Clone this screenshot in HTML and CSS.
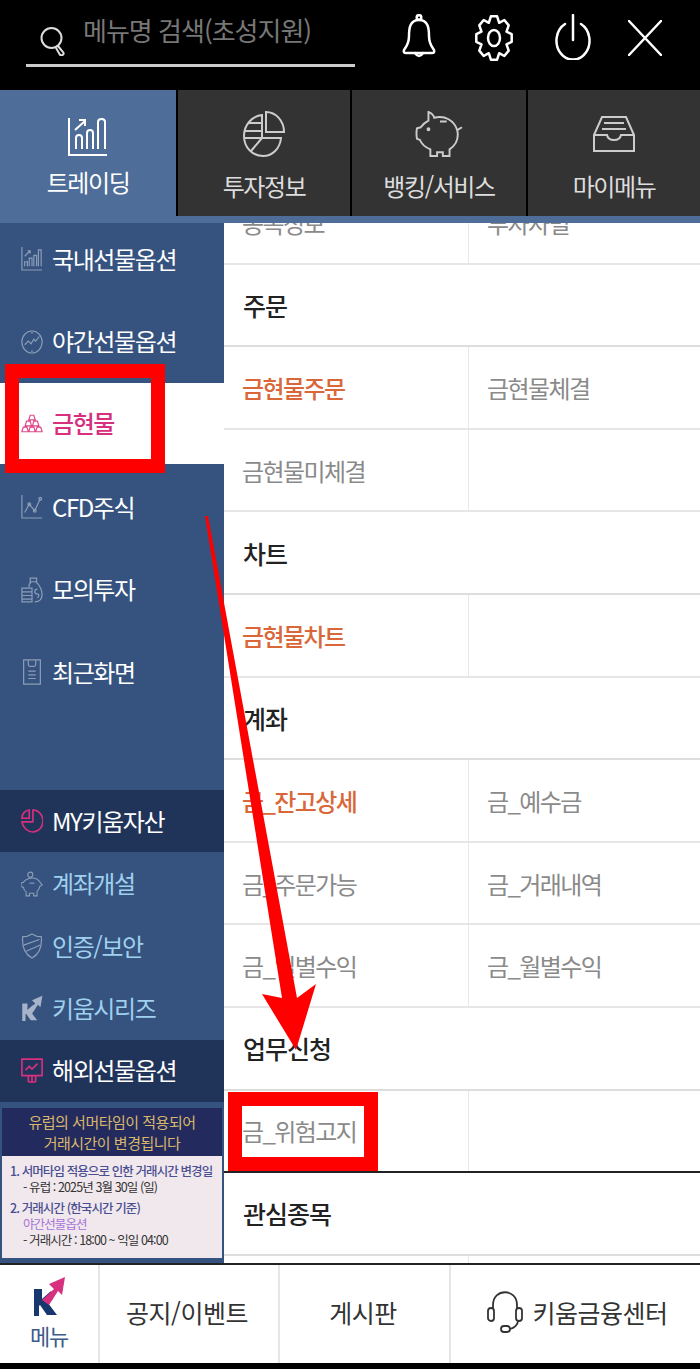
FILE: index.html
```html
<!DOCTYPE html>
<html lang="ko">
<head>
    <meta charset="UTF-8">
    <title>메뉴</title>
    <link rel="stylesheet" href="styles.css">
</head>
<body>
<svg class="defs" width="0" height="0">
    <symbol id="kiwoom" viewBox="0 0 32 40">
        <path class="k-letter" d="M1 13h8v10l9 -8l2 8l-5 4l9 12h-10l-7 -10l-1 1v10h-5z"/>
        <path class="k-arrow" d="M9 24l12 -11l-5 -5l16 -7l-3 18l-4 -4l-9 14z"/>
    </symbol>
</svg>
<div class="page">
    <header class="topbar">
        <div class="search">
            <svg class="search-icon" viewBox="0 0 26 30"><circle cx="11.5" cy="12" r="10"/><path d="M18 20l5 6q1.500 2 -0.500 3t-3 -1l-3.500 -6"/></svg>
            <span class="search-text">메뉴명 검색(초성지원)</span>
        </div>
        <svg class="top-icon bell" viewBox="0 0 34 46"><circle cx="17" cy="3.500" r="2.300"/><path d="M17 6c-9 0 -10 8 -10 16c0 8 -3 11 -5 14q-1 3 2 3h26q3 0 2 -3c-2 -3 -5 -6 -5 -14c0 -8 -1 -16 -10 -16z"/><path d="M13 39q4 6 8 0"/></svg>
        <svg class="top-icon gear" viewBox="0 0 38 46"><path d="M15.900 1.300L22.100 1.300L24.200 7.800L29.300 5L33.700 10.400L31.500 16.700L36.700 19.200L36.700 26.800L31.500 29.300L33.700 35.600L29.300 41L24.200 38.200L22.100 44.700L15.900 44.700L13.800 38.200L8.700 41L4.300 35.600L6.500 29.300L1.300 26.800L1.300 19.200L6.500 16.700L4.300 10.400L8.700 5L13.800 7.800Z"/><ellipse cx="19" cy="23" rx="6" ry="8"/></svg>
        <svg class="top-icon power" viewBox="0 0 36 46"><path d="M18 1v25"/><path d="M10 10a16.500 19 0 1 0 16 0"/></svg>
        <svg class="top-icon close" viewBox="0 0 34 36"><path d="M1 1l32 34M33 1l-32 34"/></svg>
    </header>

    <nav class="tabs">
        <div class="tab tab-on">
            <svg class="tab-icon" viewBox="0 0 40 40"><path d="M1 1v37h38"/><path d="M8 32v-11q0 -3 3 -3t3 3v11M19 32v-16q0 -3 3 -3t3 3v16M30 32v-27q0 -3 3.500 -3t3.500 3v27"/><path d="M7 13l10 -9M11 3h6v6"/></svg>
            <span>트레이딩</span>
        </div>
        <div class="tab">
            <svg class="tab-icon" viewBox="0 0 42 46"><path d="M23 1c10 0 18 9 18 20h-18z"/><path d="M19 4c-10 1 -18 10 -18 21c0 12 9 20 19 20c10 0 17 -8 18 -18h-19z"/><path d="M5 12h14M1 20h18M1 27h18M19 27l-11 13"/></svg>
            <span>투자정보</span>
        </div>
        <div class="tab">
            <svg class="tab-icon pig" viewBox="0 0 48 48"><path d="M13 1q5 2 6 6c11 -3 21 3 24 13c2 9 -2 16 -8 20v7h-7v-4h-6v4h-7v-7c-5 -2 -9 -5 -11 -10l-3 -1q-1 -6 0 -11l4 -1c2 -3 4 -5 8 -7z"/><path d="M43 20l5 -3M25 11h7"/><circle cx="13" cy="19" r="1"/></svg>
            <span>뱅킹/서비스</span>
        </div>
        <div class="tab">
            <svg class="tab-icon" viewBox="0 0 42 36"><path d="M9 1h24l8 18v16h-40v-16z"/><path d="M1 19h13q1 5 7 5t7 -5h13"/><path d="M11 7h20M9 13h24"/></svg>
            <span>마이메뉴</span>
        </div>
    </nav>
    <div class="strip"></div>

    <main class="main">
        <aside class="side">
            <ul class="side-list">
                <li class="side-item">
                    <svg class="side-icon" viewBox="0 0 24 26"><path d="M1 0v25h22"/><path d="M4 21v-5h3v5M9 21v-9h3v9M14 21v-12h3v12M19 21v-18h3v18"/><path d="M4 10l6 -6M7 4h3v3"/></svg>
                    <span>국내선물옵션</span>
                </li>
                <li class="side-item">
                    <svg class="side-icon" viewBox="0 0 24 26"><ellipse cx="12" cy="13" rx="11" ry="12"/><path d="M4 16l4 -4l3 3l3 -5l2 2l4 -5"/><path d="M12 2v2M12 22v2"/></svg>
                    <span>야간선물옵션</span>
                </li>
                <li class="side-item side-on">
                    <svg class="side-icon gold" viewBox="0 0 24 20"><path d="M10 1h4l1.500 5h-7zM6 7.500h4l1.500 5h-7zM14 7.500h4l1.500 5h-7zM2.500 14h4l1.500 5h-7zM10 14h4l1.500 5h-7zM17.500 14h4l1.500 5h-7z"/></svg>
                    <span>금현물</span>
                </li>
                <li class="side-item">
                    <svg class="side-icon" viewBox="0 0 24 26"><path d="M1 0v25h22"/><path d="M4 19l5 -9l6 7l6 -13"/><circle cx="9" cy="10" r="1.500"/><circle cx="15" cy="17" r="1.500"/><circle cx="21" cy="4" r="1.500"/></svg>
                    <span>CFD주식</span>
                </li>
                <li class="side-item">
                    <svg class="side-icon" viewBox="0 0 24 28"><path d="M10 1h7v4h-7zM11 5q-3 3 -2 6M16 5c4 3 7 9 7 14c0 5 -3 8 -8 8"/><path d="M1 12h11v15h-11zM1 16h11M1 20h11M1 24h11"/><path d="M18 13q-3 0 -3 2.500t3 3t0 4"/></svg>
                    <span>모의투자</span>
                </li>
                <li class="side-item">
                    <svg class="side-icon" viewBox="0 0 20 28"><path d="M1 1h18v26h-18z"/><path d="M6 1v5q0 2 2 2h4q2 0 2 -2v-5"/><path d="M6 13h8M6 17h8M6 21h8"/></svg>
                    <span>최근화면</span>
                </li>
            </ul>
            <div class="side-group">
                <div class="side-row side-dark">
                    <svg class="side-icon pink" viewBox="0 0 24 26"><path d="M13 1a11 12 0 0 1 0 24c-6 0 -11 -5 -12 -11h12z"/><path d="M9 1v9h-8c0 -5 4 -9 8 -9z"/></svg>
                    <span>MY키움자산</span>
                </div>
                <div class="side-row side-sub">
                    <svg class="side-icon" viewBox="0 0 26 30"><circle cx="11" cy="4" r="3"/><path d="M6 10c5 -3 12 -3 15 1l4 5l-3 2c0 3 -2 5 -3 6v5h-4v-3h-5v3h-4v-5q-3 -2 -3 -5l-3 -1v-4l3 -1q1 -2 3 -3z"/><path d="M10 14h6"/></svg>
                    <span>계좌개설</span>
                </div>
                <div class="side-row side-sub">
                    <svg class="side-icon" viewBox="0 0 22 28"><path d="M11 1c3 2 6 3 10 3c1 10 -1 18 -10 23c-9 -5 -11 -13 -10 -23c4 0 7 -1 10 -3z"/><path d="M2 13l17 -6M4 20l16 -7"/></svg>
                    <span>인증/보안</span>
                </div>
                <div class="side-row side-sub">
                    <svg class="side-icon k-side"><use href="#kiwoom"/></svg>
                    <span>키움시리즈</span>
                </div>
                <div class="side-row side-dark">
                    <svg class="side-icon pink" viewBox="0 0 24 28"><path d="M1 1h22v18h-22zM8 26h8M12 19v7M8 19v7M16 19v7"/><path d="M5 13l4 -4l3 3l6 -6"/></svg>
                    <span>해외선물옵션</span>
                </div>
            </div>
            <div class="banner">
                <div class="banner-head">
                    <p>유럽의 서머타임이 적용되어</p>
                    <p>거래시간이 변경됩니다</p>
                </div>
                <div class="banner-body">
                    <p class="b-title">1. 서머타임 적용으로 인한 거래시간 변경일</p>
                    <p class="b-line">- 유럽 : 2025년 3월 30일 (일)</p>
                    <p class="b-title b-second">2. 거래시간 (한국시간 기준)</p>
                    <p class="b-line b-purple">야간선물옵션</p>
                    <p class="b-line">- 거래시간 : 18:00 ~ 익일 04:00</p>
                </div>
            </div>
        </aside>

        <section class="content">
            <div class="row"><div class="cell">종목정보</div><div class="cell">투자자별</div></div>
            <div class="row head">주문</div>
            <div class="row"><div class="cell hot">금현물주문</div><div class="cell">금현물체결</div></div>
            <div class="row"><div class="cell">금현물미체결</div><div class="cell"></div></div>
            <div class="row head">차트</div>
            <div class="row"><div class="cell hot">금현물차트</div><div class="cell"></div></div>
            <div class="row head">계좌</div>
            <div class="row"><div class="cell hot">금_잔고상세</div><div class="cell">금_예수금</div></div>
            <div class="row"><div class="cell">금_주문가능</div><div class="cell">금_거래내역</div></div>
            <div class="row"><div class="cell">금_일별수익</div><div class="cell">금_월별수익</div></div>
            <div class="row head">업무신청</div>
            <div class="row row-last"><div class="cell">금_위험고지</div><div class="cell"></div></div>
            <div class="row head">관심종목</div>
            <div class="row"><div class="cell"></div><div class="cell"></div></div>
        </section>

        <div class="red-box box-gold"></div>
        <div class="red-box box-risk"></div>
        <svg class="arrow" viewBox="0 0 130 540"><path d="M1 0L4 0L93 482L112 468L92 534L58 478L78 482Z"/></svg>
    </main>

    <footer class="bottom">
        <div class="bot-menu">
            <svg class="bot-logo"><use href="#kiwoom"/></svg>
            <span>메뉴</span>
        </div>
        <div class="bot-link link-notice">공지/이벤트</div>
        <div class="bot-link link-board">게시판</div>
        <div class="bot-link link-center">
            <svg class="headset" viewBox="0 0 36 42"><path d="M6 17v-3c0 -17 24 -17 24 0v3"/><rect x="1" y="17" width="6" height="13" rx="3"/><rect x="29" y="17" width="6" height="13" rx="3"/><path d="M31 30c0 4 -4 7 -8 8"/><rect x="14" y="35" width="9" height="6" rx="3"/></svg>
            <span>키움금융센터</span>
        </div>
    </footer>
</div>
</body>
</html>
```
FILE: styles.css
```css
* { box-sizing: border-box; }
body {
    margin: 0;
    background: #000;
    font-family: "Noto Sans CJK KR", "Noto Sans", sans-serif;
}
p { margin: 0; }
ul { margin: 0; padding: 0; list-style: none; }
.defs { position: absolute; }
.k-letter { fill: currentColor; stroke: none; }
.k-arrow { fill: var(--arrow, currentColor); stroke: none; }

.page {
    width: 700px;
    height: 1369px;
    display: flex;
    flex-direction: column;
    overflow: hidden;
}

/* top search bar */
.topbar {
    height: 90px;
    flex: none;
    background: #000;
    display: flex;
    align-items: flex-start;
}
.search {
    width: 329px;
    height: 67px;
    margin-left: 26px;
    padding: 10px 0 0 14px;
    border-bottom: 3px solid #ccc;
    display: flex;
    align-items: flex-start;
}
.search-icon {
    width: 26px;
    height: 30px;
    margin-top: 16px;
    fill: none;
    stroke: #ddd;
    stroke-width: 2;
}
.search-text {
    margin-left: 17px;
    font-size: 26px;
    line-height: 40px;
    letter-spacing: -1px;
    color: #777;
}
.top-icon {
    flex: none;
    fill: none;
    stroke: #fff;
    stroke-width: 2.5;
    stroke-linejoin: round;
    stroke-linecap: round;
    margin-top: 14px;
}
.bell { width: 34px; height: 46px; margin-left: 47px; }
.gear { width: 38px; height: 46px; margin-left: 39px; margin-top: 15px; }
.power { width: 36px; height: 46px; margin-left: 42px; }
.close { width: 34px; height: 36px; margin-left: 37px; margin-top: 20px; }

/* main tabs */
.tabs {
    height: 126px;
    flex: none;
    display: grid;
    grid-template-columns: 176px 172px 174px 172px;
    gap: 2px;
    background: #000;
}
.tab {
    background: #333;
    color: #ddd;
    font-size: 24px;
    letter-spacing: -1.4px;
    display: flex;
    flex-direction: column;
    align-items: center;
    padding-top: 21px;
}
.tab span { margin-top: 9px; line-height: 40px; }
.tab-icon { width: 42px; height: 46px; fill: none; stroke: #ccc; stroke-width: 2; }
.pig { width: 48px; }
.tab-on { background: #4f6d99; color: #fff; padding-top: 27px; }
.tab-on .tab-icon { width: 40px; height: 40px; stroke: #fff; }
.tab-on span { margin-top: 5px; }
.strip { height: 7px; flex: none; background: #4f6d99; }

.main {
    flex: 1;
    position: relative;
    display: flex;
    background: #fff;
    overflow: hidden;
}

/* left menu */
.side {
    width: 224px;
    flex: none;
    background: #36537f;
    display: flex;
    flex-direction: column;
    overflow: hidden;
}
.side-list { margin-top: -5px; }
.side-item, .side-row {
    display: flex;
    align-items: center;
    padding-left: 21px;
    color: #fff;
    font-size: 24px;
    letter-spacing: -1.4px;
}
.side-item { height: 82.6px; }
.side-item span, .side-row span { margin-left: 9px; position: relative; top: -1px; }
.side-on {
    background: #fff;
    color: #d6307f;
    font-weight: 500;
    border-bottom: 2px solid #36537f;
}
.side-on .side-icon { stroke: #e0488c; }
.side-icon {
    width: 22px;
    height: 26px;
    flex: none;
    fill: none;
    stroke: #8b9db8;
    stroke-width: 1.3;
}
.side-icon.gold { height: 19px; }
.side-icon.pink { stroke: #d6307f; stroke-width: 1.8; }
.side-group { margin-top: auto; }
.side-row { height: 62.4px; }
.side-dark { background: #20345a; }
.side-sub { color: #9fd0ee; }
.k-side { color: #a6b3c8; }

.banner {
    height: 161px;
    flex: none;
    padding: 6px 2px 5px;
    display: flex;
    flex-direction: column;
}
.banner-head {
    height: 48px;
    flex: none;
    background: #232a5e;
    color: #d9b76b;
    font-size: 15px;
    line-height: 21px;
    letter-spacing: -0.5px;
    text-align: center;
    padding-top: 3px;
}
.banner-body {
    flex: 1;
    background: #f0e8ec;
    padding: 7px 0 0 8px;
    font-size: 12.5px;
    line-height: 16px;
    letter-spacing: -0.9px;
    white-space: nowrap;
}
.b-title { color: #4a4f92; font-weight: 500; }
.b-second { margin-top: 5px; }
.b-line { color: #333; padding-left: 13px; }
.b-purple { color: #a774d8; }

/* right table */
.content { flex: 1; margin-top: -41px; }
.row {
    height: 82.6px;
    display: flex;
    border-bottom: 2px solid #e6e6e6;
    font-size: 24px;
    letter-spacing: -1.6px;
    color: #8a8a8a;
}
.cell {
    display: flex;
    align-items: center;
    width: 244px;
    padding-left: 18px;
}
.cell + .cell {
    width: 232px;
    padding-left: 18px;
    border-left: 1px solid #e8e8e8;
}
.hot { color: #d9673a; font-weight: 500; }
.head {
    align-items: center;
    padding-left: 19px;
    color: #222;
    font-weight: 500;
    font-size: 25px;
    letter-spacing: -1px;
    border-bottom-color: #ddd;
}
.row-last { border-bottom-color: #222; }

/* annotations drawn over the screen */
.red-box { position: absolute; border: 14px solid #f00; }
.box-gold { left: 5px; top: 141px; width: 160px; height: 109px; }
.box-risk { left: 228px; top: 869px; width: 150px; height: 79px; }
.arrow {
    position: absolute;
    left: 204px;
    top: 293px;
    width: 130px;
    height: 540px;
    fill: #f00;
}

/* bottom bar */
.bottom {
    height: 106px;
    flex: none;
    background: #fff;
    border-top: 2px solid #222;
    border-bottom: 6px solid #000;
    display: flex;
    color: #333;
}
.bot-menu {
    width: 98px;
    flex: none;
    display: flex;
    flex-direction: column;
    align-items: center;
    padding-top: 11px;
    color: #3d5a8a;
    font-size: 22px;
    line-height: 30px;
    letter-spacing: -1.2px;
}
.bot-logo {
    width: 32px;
    height: 40px;
    margin-bottom: 4px;
    color: #17376f;
    --arrow: #d6307f;
}
.bot-link {
    display: flex;
    align-items: center;
    justify-content: center;
    border-left: 2px solid #e6e6e6;
    font-size: 25px;
    letter-spacing: -0.5px;
    padding-bottom: 4px;
}
.link-notice { width: 180px; padding-right: 4px; }
.link-board { width: 171px; padding-right: 3px; }
.link-center { flex: 1; padding-left: 4px; }
.headset {
    width: 36px;
    height: 42px;
    margin-right: 9px;
    fill: none;
    stroke: #333;
    stroke-width: 1.8;
}
```
